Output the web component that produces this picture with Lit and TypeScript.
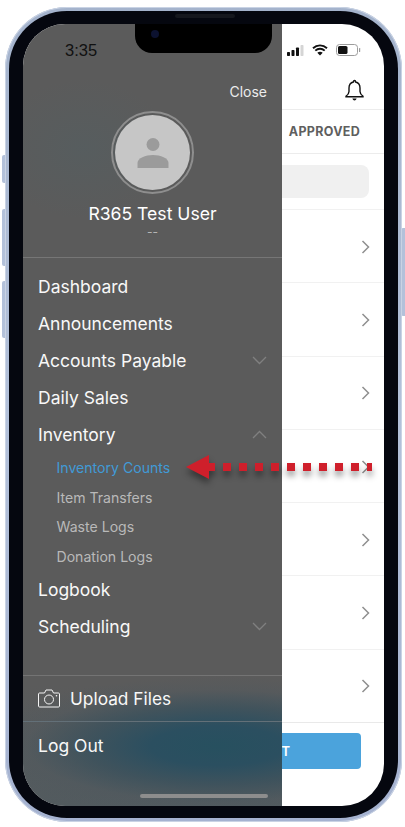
import { LitElement, css, html, svg } from "lit";
import { customElement } from "lit/decorators.js";

const chevronRight = html`<svg class="chev" width="9" height="14" viewBox="0 0 9 14"><path d="M1.5 1 L7.5 7 L1.5 13" fill="none" stroke="#8f8f8f" stroke-width="1.5"/></svg>`;

const caret = (up: boolean) => html`<svg class="caret" width="15" height="9" viewBox="0 0 15 9">
  <path d=${up ? "M1 8 L7.5 1.5 L14 8" : "M1 1 L7.5 7.5 L14 1"} fill="none" stroke="#808080" stroke-width="1.3"/>
</svg>`;

const arrow = svg`<path d="M186 467 L209 455 L209 463 L215 463 L215 471 L209 471 L209 479 Z" fill="#cf1f2b"/>
  <path d="M223 467 H372" stroke="#cf1f2b" stroke-width="8" stroke-dasharray="8 8"/>`;

@customElement("app-root")
export class AppRoot extends LitElement {
  static styles = css`
    :host {
      display: block;
      width: 405px;
      height: 827px;
      background: #fff;
      font-family: Inter, "Liberation Sans", sans-serif;
      overflow: hidden;
      position: relative;
    }
    .phone {
      position: absolute;
      left: 5px;
      top: 7px;
      width: 397px;
      height: 815px;
      box-sizing: border-box;
      padding: 4px;
      border-radius: 62px;
      background: linear-gradient(#a4b3cc, #b3c1da 50%, #a5b2d0);
      box-shadow: inset 0 0 0 1px #c9d3e4;
    }
    .bezel {
      height: 100%;
      box-sizing: border-box;
      padding: 13px 14px 12px 14px;
      border-radius: 58px;
      background: #05070f;
    }
    .screen {
      position: relative;
      height: 100%;
      border-radius: 42px;
      overflow: hidden;
      background: #fff;
    }
    .side {
      position: absolute;
      width: 4px;
      background: #b3c1da;
      border-radius: 2px 0 0 2px;
    }
    .speaker {
      position: absolute;
      left: 170px;
      top: 7px;
      width: 60px;
      height: 4px;
      background: #15171d;
      border-radius: 3px;
    }
    .main {
      display: flex;
      flex-direction: column;
    }
    .main-header {
      height: 86px;
      box-sizing: border-box;
      padding: 55px 20px 0 0;
      display: flex;
      justify-content: flex-end;
      border-bottom: 1px solid #ececec;
    }
    .tabs {
      height: 44px;
      box-sizing: border-box;
      padding-right: 24px;
      display: flex;
      align-items: center;
      justify-content: flex-end;
      font-size: 12.5px;
      font-weight: 700;
      letter-spacing: 0.3px;
      color: #5f5f5f;
      border-bottom: 1px solid #ececec;
    }
    .search {
      height: 56px;
      box-sizing: border-box;
      padding: 11px 15px 11px 0;
      border-bottom: 1px solid #f1f1f1;
    }
    .search div {
      height: 33px;
      background: #f0f0f0;
      border-radius: 8px;
    }
    .row {
      height: 73.3px;
      box-sizing: border-box;
      display: flex;
      align-items: center;
      justify-content: flex-end;
      padding: 1px 14px 0 0;
      border-bottom: 1px solid #f1f1f1;
    }
    .row.last {
      border-bottom: 1px solid #e9e9e9;
    }
    .main-footer {
      padding: 10px 23px 0 62px;
    }
    .action {
      height: 36px;
      border-radius: 4px;
      background: #4ba3dc;
      color: #fff;
      font-size: 13px;
      font-weight: 600;
      letter-spacing: 0.5px;
      display: flex;
      align-items: center;
      justify-content: center;
    }
    .drawer {
      position: absolute;
      left: 0;
      top: 0;
      bottom: 0;
      width: 259px;
      display: flex;
      flex-direction: column;
      color: #fff;
      background:
        radial-gradient(ellipse 240px 70px at 195px 722px, #27505f 0%, #2b4f60 28%, rgba(56, 80, 92, 0.75) 55%, rgba(78, 88, 94, 0.35) 80%, rgba(90, 90, 90, 0) 100%),
        linear-gradient(rgba(80, 90, 96, 0) 660px, rgba(78, 90, 96, 0.7) 782px),
        radial-gradient(ellipse 90px 70px at 60px 125px, rgba(80, 96, 100, 0.4), rgba(90, 90, 90, 0)),
        #5b5b5b;
    }
    .close {
      height: 59px;
      box-sizing: border-box;
      padding: 59px 15px 0 0;
      text-align: right;
      font-size: 14px;
      line-height: 18px;
      color: #ececec;
      margin-bottom: 9px;
    }
    .profile {
      display: flex;
      flex-direction: column;
      align-items: center;
      height: 165px;
      border-bottom: 1px solid #767676;
    }
    .ring {
      width: 83px;
      height: 83px;
      margin-top: 19px;
      box-sizing: border-box;
      border-radius: 50%;
      border: 2px solid #8e8e8e;
      padding: 2px;
    }
    .avatar {
      width: 100%;
      height: 100%;
      border-radius: 50%;
      background: #c6c6c6;
      display: flex;
      align-items: center;
      justify-content: center;
    }
    .name {
      margin-top: 10px;
      font-size: 17.6px;
      line-height: 20px;
      color: #fff;
    }
    .sub {
      font-size: 12px;
      line-height: 14px;
      color: #b5b5b5;
      margin-top: 1px;
    }
    .menu {
      flex: 1;
      padding-top: 10px;
    }
    .item {
      height: 37px;
      display: flex;
      align-items: center;
      justify-content: space-between;
      padding: 0 15px 0 15px;
      font-size: 17.5px;
      color: #f8f8f8;
    }
    .subitem {
      height: 29.5px;
      display: flex;
      align-items: center;
      padding-left: 33.5px;
      font-size: 14.1px;
      color: #b9b9b9;
    }
    .subitem.active {
      color: #419ad6;
    }
    .upload {
      height: 46px;
      box-sizing: border-box;
      border-top: 1px solid #747474;
      display: flex;
      align-items: center;
      gap: 10px;
      padding: 0 15px;
      font-size: 17.3px;
      color: #f8f8f8;
    }
    .logout {
      height: 85px;
      box-sizing: border-box;
      border-top: 1px solid #637078;
      padding: 13px 15px 0;
      font-size: 17.5px;
      line-height: 22px;
      color: #f8f8f8;
    }
    .home {
      position: absolute;
      left: 117px;
      top: 770px;
      width: 128px;
      height: 4px;
      border-radius: 2px;
      background: #8d8d8d;
    }
    .notch {
      position: absolute;
      left: 112px;
      top: 0;
      width: 137px;
      height: 29px;
      background: #000;
      border-radius: 0 0 17px 17px;
    }
    .camera {
      position: absolute;
      left: 16px;
      top: 6px;
      width: 8px;
      height: 8px;
      border-radius: 50%;
      background: #0c1230;
    }
    .time {
      position: absolute;
      left: 42px;
      top: 17px;
      font-family: "Liberation Sans", sans-serif;
      font-size: 16.5px;
      line-height: 18px;
      color: #111;
    }
    .status {
      position: absolute;
      left: 264px;
      top: 20px;
      display: flex;
      align-items: center;
      gap: 8px;
    }
    .arrow {
      position: absolute;
      left: 0;
      top: 0;
      filter: drop-shadow(0 5px 3px rgba(0, 0, 0, 0.4));
    }
  `;

  render() {
    return html`
      <div class="side" style="left:2px;top:155px;height:28px"></div>
      <div class="side" style="left:2px;top:209px;height:57px"></div>
      <div class="side" style="left:2px;top:281px;height:57px"></div>
      <div class="side" style="left:401px;top:228px;height:88px"></div>
      <div class="phone">
        <div class="bezel">
          <div class="screen">
            <div class="main">
              <div class="main-header">
                <svg width="19" height="22" viewBox="0 0 19 22">
                  <path d="M9.5 1.5 C10.4 1.5 10.6 2.3 10.6 3 C13.4 3.6 15 6 15 9 L15 12.5 C15 14.5 16.4 16 18 17.2 L18 17.8 L1 17.8 L1 17.2 C2.6 16 4 14.5 4 12.5 L4 9 C4 6 5.6 3.6 8.4 3 C8.4 2.3 8.6 1.5 9.5 1.5 Z" fill="none" stroke="#111" stroke-width="1.4"/>
                  <path d="M7.4 19.5 H11.6 C11.2 20.8 10.4 21.4 9.5 21.4 C8.6 21.4 7.8 20.8 7.4 19.5 Z" fill="#111"/>
                </svg>
              </div>
              <div class="tabs">APPROVED</div>
              <div class="search"><div></div></div>
              ${[0, 1, 2, 3, 4, 5, 6].map(
                (i) => html`<div class="row ${i === 6 ? "last" : ""}">${chevronRight}</div>`
              )}
              <div class="main-footer"><div class="action">START NEW COUNT</div></div>
            </div>

            <div class="drawer">
              <div class="close">Close</div>
              <div class="profile">
                <div class="ring">
                  <div class="avatar">
                    <svg width="32" height="32" viewBox="0 0 32 32">
                      <circle cx="16" cy="7.5" r="6.5" fill="#9b9b9b"/>
                      <path d="M0.5 31 V26 C0.5 21 8.5 18 16 18 C23.5 18 31.5 21 31.5 26 V31 Z" fill="#9b9b9b"/>
                    </svg>
                  </div>
                </div>
                <div class="name">R365 Test User</div>
                <div class="sub">--</div>
              </div>
              <div class="menu">
                <div class="item">Dashboard</div>
                <div class="item">Announcements</div>
                <div class="item">Accounts Payable ${caret(false)}</div>
                <div class="item">Daily Sales</div>
                <div class="item">Inventory ${caret(true)}</div>
                <div class="subs">
                  <div class="subitem active">Inventory Counts</div>
                  <div class="subitem">Item Transfers</div>
                  <div class="subitem">Waste Logs</div>
                  <div class="subitem">Donation Logs</div>
                </div>
                <div class="item">Logbook</div>
                <div class="item">Scheduling ${caret(false)}</div>
              </div>
              <div class="upload">
                <svg width="22" height="19" viewBox="0 0 22 19">
                  <path d="M1.5 4 H6.5 L8 1 H14 L15.5 4 H20.5 C21 4 21.5 4.5 21.5 5 V17 C21.5 17.6 21 18 20.5 18 H1.5 C1 18 0.5 17.6 0.5 17 V5 C0.5 4.5 1 4 1.5 4 Z" fill="none" stroke="#f4f4f4" stroke-width="1"/>
                  <circle cx="11" cy="10.5" r="4.5" fill="none" stroke="#f4f4f4" stroke-width="1"/>
                  <circle cx="18.5" cy="6.8" r="0.8" fill="#f4f4f4"/>
                </svg>
                Upload Files
              </div>
              <div class="logout">Log Out</div>
              <div class="home"></div>
            </div>

            <div class="notch"><div class="camera"></div></div>
            <div class="time">3:35</div>
            <div class="status">
              <svg width="17" height="11" viewBox="0 0 17 11">
                <rect x="0" y="7" width="3" height="4" rx="0.7" fill="#111"/>
                <rect x="4.5" y="5" width="3" height="6" rx="0.7" fill="#111"/>
                <rect x="9" y="2.5" width="3" height="8.5" rx="0.7" fill="#111"/>
                <rect x="13.5" y="0" width="3" height="11" rx="0.7" fill="#d5d5d5"/>
              </svg>
              <svg width="16" height="12" viewBox="0 0 16 12">
                <path d="M1 4.2 C5 0.4 11 0.4 15 4.2 M3.3 6.6 C6 4.1 10 4.1 12.7 6.6" fill="none" stroke="#111" stroke-width="1.9"/>
                <path d="M8 11.5 L5.3 8.8 C6.8 7.5 9.2 7.5 10.7 8.8 Z" fill="#111"/>
              </svg>
              <svg width="25" height="12" viewBox="0 0 25 12">
                <rect x="0.5" y="0.5" width="21" height="11" rx="3" fill="none" stroke="#9c9c9c"/>
                <rect x="2" y="2" width="9.5" height="8" rx="1.6" fill="#111"/>
                <rect x="23" y="4" width="1.2" height="4" rx="0.6" fill="#9c9c9c"/>
              </svg>
            </div>
          </div>
          <div class="speaker"></div>
        </div>
      </div>
      <svg class="arrow" width="405" height="827" viewBox="0 0 405 827">${arrow}</svg>
    `;
  }
}
